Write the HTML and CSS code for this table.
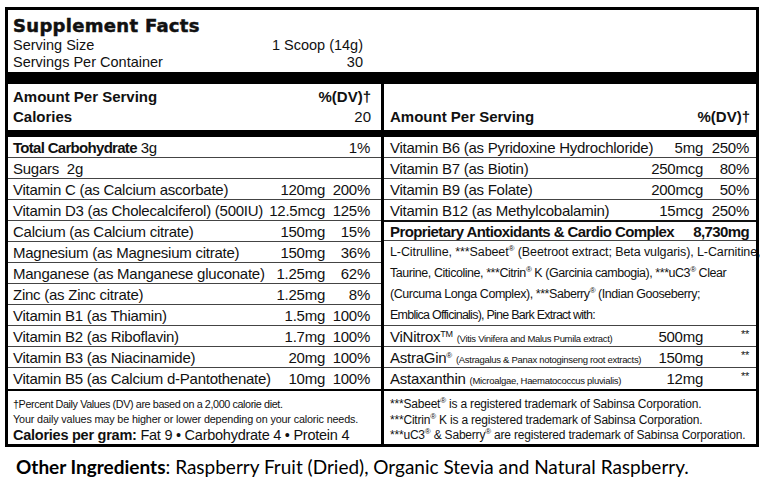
FILE: index.html
```html
<!DOCTYPE html>
<html>
<head>
<meta charset="utf-8">
<link rel="stylesheet" href="styles.css">
</head>
<body>
<div class="label">
  <div class="top">
    <div class="title">Supplement Facts</div>
    <div class="serv"><span>Serving Size</span><span>1 Scoop (14g)</span></div>
    <div class="serv"><span>Servings Per Container</span><span>30</span></div>
  </div>
  <div class="bigbar"></div>
  <div class="cols">
    <div class="col left">
      <div class="head">
        <div class="hrow"><span>Amount Per Serving</span><span>%(DV)†</span></div>
        <div class="hrow"><span>Calories</span><span class="reg">20</span></div>
      </div>
      <div class="bar"></div>
      <div class="row"><span class="name"><b class="tight">Total Carbohydrate</b> 3g</span><span class="amt"></span><span class="pct">1%</span></div>
      <div class="row"><span class="name">Sugars&nbsp; 2g</span><span class="amt"></span><span class="pct"></span></div>
      <div class="row"><span class="name">Vitamin C (as Calcium ascorbate)</span><span class="amt">120mg</span><span class="pct">200%</span></div>
      <div class="row"><span class="name">Vitamin D3 (as Cholecalciferol) (500IU)</span><span class="amt">12.5mcg</span><span class="pct">125%</span></div>
      <div class="row"><span class="name">Calcium (as Calcium citrate)</span><span class="amt">150mg</span><span class="pct">15%</span></div>
      <div class="row"><span class="name">Magnesium (as Magnesium citrate)</span><span class="amt">150mg</span><span class="pct">36%</span></div>
      <div class="row"><span class="name">Manganese (as Manganese gluconate)</span><span class="amt">1.25mg</span><span class="pct">62%</span></div>
      <div class="row"><span class="name">Zinc (as Zinc citrate)</span><span class="amt">1.25mg</span><span class="pct">8%</span></div>
      <div class="row"><span class="name">Vitamin B1 (as Thiamin)</span><span class="amt">1.5mg</span><span class="pct">100%</span></div>
      <div class="row"><span class="name">Vitamin B2 (as Riboflavin)</span><span class="amt">1.7mg</span><span class="pct">100%</span></div>
      <div class="row"><span class="name">Vitamin B3 (as Niacinamide)</span><span class="amt">20mg</span><span class="pct">100%</span></div>
      <div class="row last"><span class="name">Vitamin B5 (as Calcium d-Pantothenate)</span><span class="amt">10mg</span><span class="pct">100%</span></div>
      <div class="foot lfoot">
        <div class="small first">†Percent Daily Values (DV) are based on a 2,000 calorie diet.</div>
        <div class="small">Your daily values may be higher or lower depending on your caloric needs.</div>
        <div class="cal"><b>Calories per gram:</b> Fat 9 • Carbohydrate 4 • Protein 4</div>
      </div>
    </div>
    <div class="col right">
      <div class="head rhead">
        <div class="hrow"><span>Amount Per Serving</span><span>%(DV)†</span></div>
      </div>
      <div class="bar"></div>
      <div class="row"><span class="name">Vitamin B6 (as Pyridoxine Hydrochloride)</span><span class="amt">5mg</span><span class="pct">250%</span></div>
      <div class="row"><span class="name">Vitamin B7 (as Biotin)</span><span class="amt">250mcg</span><span class="pct">80%</span></div>
      <div class="row"><span class="name">Vitamin B9 (as Folate)</span><span class="amt">200mcg</span><span class="pct">50%</span></div>
      <div class="row thickb"><span class="name">Vitamin B12 (as Methylcobalamin)</span><span class="amt">15mcg</span><span class="pct">250%</span></div>
      <div class="row prop"><span class="name">Proprietary Antioxidants &amp; Cardio Complex</span><span class="amt">8,730mg</span></div>
      <div class="para"><span class="l1">L-Citrulline, ***Sabeet<sup>®</sup> (Beetroot extract; Beta vulgaris), L-Carnitine,</span><br>Taurine, Citicoline, ***Citrin<sup>®</sup> K (Garcinia cambogia), ***uC3<sup>®</sup> Clear<br>(Curcuma Longa Complex), ***Saberry<sup>®</sup> (Indian Gooseberry;<br><span class="l4">Emblica Officinalis), Pine Bark Extract with:</span></div>
      <div class="row"><span class="name">ViNitrox<sup class="tm">TM</sup> <span class="tiny">(Vitis Vinifera and Malus Pumila extract)</span></span><span class="amt">500mg</span><span class="pct star">**</span></div>
      <div class="row"><span class="name">AstraGin<sup>®</sup> <span class="tiny">(Astragalus &amp; Panax notoginseng root extracts)</span></span><span class="amt">150mg</span><span class="pct star">**</span></div>
      <div class="row last"><span class="name">Astaxanthin <span class="tiny">(Microalgae, Haematococcus pluvialis)</span></span><span class="amt">12mg</span><span class="pct star">**</span></div>
      <div class="foot rfoot">
        <div>***Sabeet<sup>®</sup> is a registered trademark of Sabinsa Corporation.</div>
        <div>***Citrin<sup>®</sup> K is a registered trademark of Sabinsa Corporation.</div>
        <div>***uC3<sup>®</sup> &amp; Saberry<sup>®</sup> are registered trademark of Sabinsa Corporation.</div>
      </div>
    </div>
  </div>
</div>
<p class="other"><b>Other Ingredients</b>: Raspberry Fruit (Dried), Organic Stevia and Natural Raspberry.</p>
</body>
</html>
```
FILE: styles.css
```css
html, body {
  margin: 0;
  padding: 0;
  background: #fff;
}
body {
  font-family: "Liberation Sans", Arial, sans-serif;
  color: #111;
}
.label {
  margin: 7px 0 0 5px;
  width: 754px;
  border: 3px solid #000;
  box-sizing: border-box;
}
.top {
  height: 62px;
  width: 355px;
  padding: 5px 0 0 5px;
  box-sizing: border-box;
}
.title {
  font-family: "DejaVu Sans", sans-serif;
  font-weight: bold;
  font-size: 18px;
  letter-spacing: 0.3px;
  line-height: 22px;
  -webkit-text-stroke: 0.5px #111;
}
.serv {
  display: flex;
  justify-content: space-between;
  font-size: 14.5px;
  line-height: 16.5px;
}
.bigbar {
  height: 12px;
  background: #000;
}
.cols {
  display: grid;
  grid-template-columns: 373px 372px;
  column-gap: 3px;
  background: #000;
}
.col {
  background: #fff;
  display: flex;
  flex-direction: column;
  min-width: 0;
}
.head {
  height: 46px;
  box-sizing: border-box;
  padding: 3px 10px 3px 5px;
}
.rhead {
  display: flex;
  flex-direction: column;
  justify-content: flex-end;
  padding: 3px 6px 3px 6px;
}
.hrow {
  display: flex;
  justify-content: space-between;
  font-weight: bold;
  font-size: 15px;
  line-height: 20px;
}
.hrow .reg {
  font-weight: normal;
}
.bar {
  height: 7px;
  background: #000;
}
.row {
  display: flex;
  align-items: center;
  height: 21px;
  box-sizing: border-box;
  border-bottom: 1px solid #444;
  padding: 0 11px 0 5px;
  font-size: 15px;
  letter-spacing: -0.25px;
  white-space: nowrap;
}
.right .row {
  padding: 0 7px 0 6px;
}
.row.last {
  border-bottom: none;
}
.row.thickb {
  height: 22px;
  border-bottom: 2px solid #111;
}
.name {
  flex: 1;
}
.amt {
  text-align: right;
}
.pct {
  width: 45px;
  text-align: right;
}
.right .pct {
  width: 46px;
}
.tight {
  letter-spacing: -0.7px;
}
.row.prop {
  height: 19px;
  font-weight: bold;
  letter-spacing: -0.6px;
}
.para {
  font-size: 12.5px;
  line-height: 21px;
  letter-spacing: -0.45px;
  padding: 1px 6px 0 6px;
  height: 85px;
  box-sizing: border-box;
  border-bottom: 1px solid #444;
  white-space: nowrap;
}
.para .l1 {
  letter-spacing: -0.1px;
}
.para .l4 {
  letter-spacing: -0.75px;
}
sup {
  font-size: 8px;
  line-height: 0;
  vertical-align: 5px;
}
sup.tm {
  font-size: 9px;
}
.tiny {
  font-size: 9.5px;
  letter-spacing: -0.3px;
}
.star {
  font-size: 11px;
  align-self: flex-start;
  padding-top: 2px;
}
.foot {
  flex: 1;
  border-top: 2px solid #000;
}
.lfoot {
  padding: 6px 5px 0 5px;
}
.small {
  font-size: 10.8px;
  line-height: 15px;
  letter-spacing: -0.15px;
}
.small.first {
  letter-spacing: -0.4px;
}
.cal {
  font-size: 14.5px;
  line-height: 17px;
  letter-spacing: -0.25px;
}
.rfoot {
  padding: 6px 6px 0 6px;
  font-size: 12px;
  line-height: 15.5px;
  letter-spacing: -0.2px;
}
.other {
  margin: 8px 0 0 16px;
  font-family: Lato, "Open Sans", sans-serif;
  font-size: 19px;
  line-height: 24px;
  color: #000;
}
```
